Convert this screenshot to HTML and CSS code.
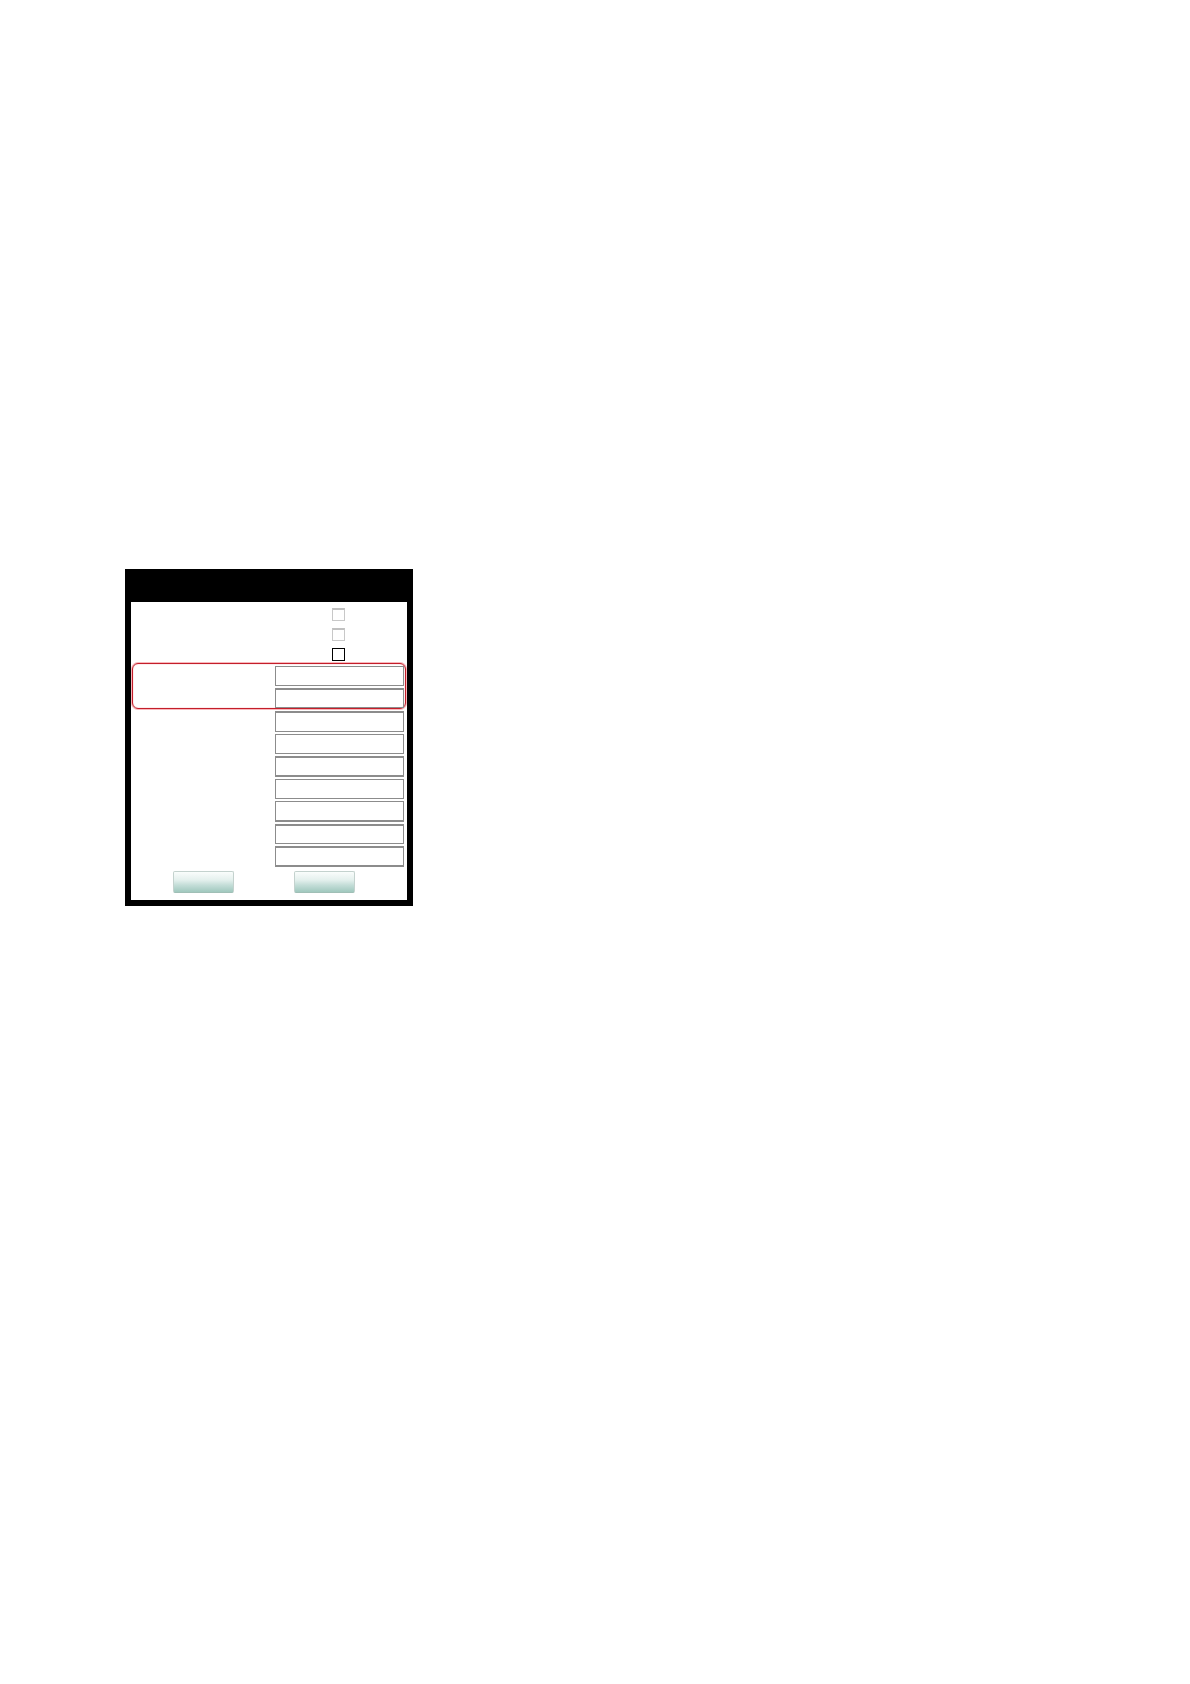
FILE: index.html
```html
<!DOCTYPE html>
<html lang="en">
  <head>
    <meta charset="utf-8" />
    <meta name="viewport" content="width=device-width, initial-scale=1" />
    <title>Settings</title>
    <link rel="stylesheet" href="styles.css">
  </head>
  <body>
    <main class="panel">
      <header class="panel-header"></header>
      <form class="panel-form">
        <div class="options">
          <div class="row"><input type="checkbox" class="check" aria-label="Option 1" disabled /></div>
          <div class="row"><input type="checkbox" class="check" aria-label="Option 2" disabled /></div>
          <div class="row"><input type="checkbox" class="check" aria-label="Option 3" /></div>
        </div>
        <div class="fields highlight">
          <div class="row"><input type="text" class="field" aria-label="Field 1" /></div>
          <div class="row"><input type="text" class="field thick-top" aria-label="Field 2" /></div>
        </div>
        <div class="fields">
          <div class="row"><input type="text" class="field tall thick-top" aria-label="Field 3" /></div>
          <div class="row"><input type="text" class="field" aria-label="Field 4" /></div>
          <div class="row"><input type="text" class="field tall thick-top thick-bottom" aria-label="Field 5" /></div>
          <div class="row"><input type="text" class="field" aria-label="Field 6" /></div>
          <div class="row"><input type="text" class="field tall thick-bottom" aria-label="Field 7" /></div>
          <div class="row"><input type="text" class="field thick-top" aria-label="Field 8" /></div>
          <div class="row"><input type="text" class="field tall thick-top thick-bottom" aria-label="Field 9" /></div>
        </div>
        <div class="actions">
          <button type="submit" aria-label="OK"></button>
          <button type="button" aria-label="Cancel"></button>
        </div>
      </form>
    </main>
  </body>
</html>
```
FILE: styles.css
```css
* {
  box-sizing: border-box;
}
body {
  margin: 0;
  padding: 569px 125px;
  background-color: white;
  font-family: "Liberation Sans", Arial, sans-serif;
  font-size: 12px;
}
.panel {
  max-width: 288px;
  padding: 0 6px 6px;
  background-color: black;
}
.panel-header {
  height: 33px;
}
.panel-form {
  padding: 6px 0 7px;
  background-color: white;
}
.row {
  display: grid;
  grid-template-columns: 1fr 129px;
}
.row > input {
  grid-column: 2;
}
.options {
  display: grid;
  gap: 7px;
  padding-right: 4px;
}
.check {
  appearance: none;
  justify-self: center;
  width: 13px;
  height: 13px;
  margin: 0;
  border: 1px solid black;
  background-color: white;
}
.check:disabled {
  border-color: #c8c8c8;
  border-top: 2px solid #c0c0c0;
}
.fields {
  display: grid;
  gap: 2px;
  padding: 0 3px;
}
.highlight {
  margin: 2px 1px;
  padding: 2px 1px 0;
  border: 1px solid #c41e2a;
  border-radius: 6px;
  box-shadow: 0 0 0 1px #f8b8bc, inset 0 0 1px #e04850;
}
.field {
  width: 100%;
  height: 20px;
  padding: 0 4px;
  border: 1px solid #8c8c8c;
  border-radius: 0;
  background-color: transparent;
  font: inherit;
}
.tall {
  height: 21px;
}
.thick-top {
  border-top-width: 2px;
}
.thick-bottom {
  border-bottom-width: 2px;
}
.actions {
  display: flex;
  gap: 60px;
  margin-top: 4px;
  padding-left: 42px;
}
.actions button {
  width: 61px;
  height: 22px;
  padding: 0;
  border: 1px solid #c4d2ce;
  border-bottom-color: #a0bfb6;
  border-radius: 2px;
  background: linear-gradient(#fafdfc, #e4f0ed 40%, #c4ded8 65%, #a0c8be);
}
```
